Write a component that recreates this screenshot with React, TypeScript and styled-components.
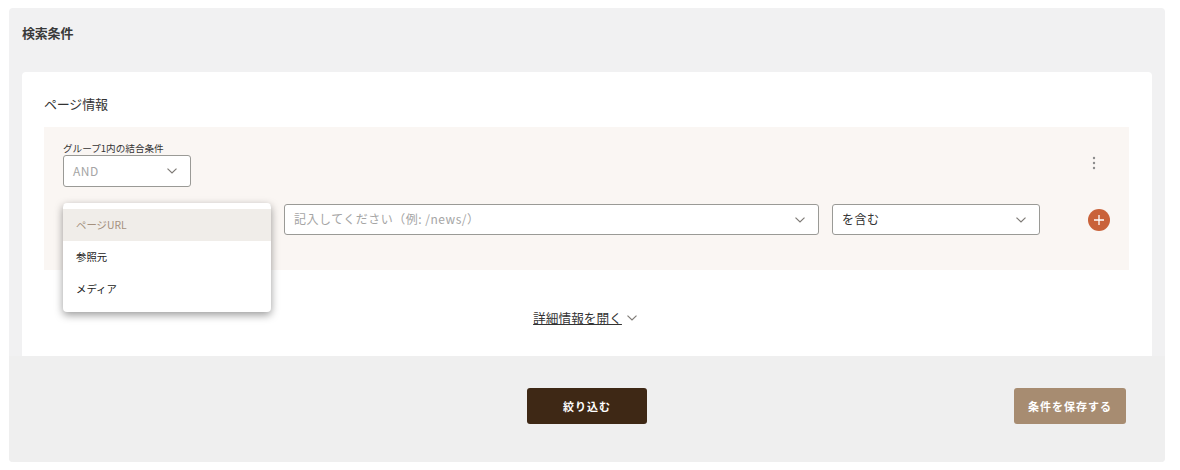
import React from "react";
import styled, { createGlobalStyle } from "styled-components";

const Global = createGlobalStyle`
  html, body {
    margin: 0;
    background: #fff;
    font-family: "Noto Sans CJK JP", "Noto Sans", sans-serif;
    color: #333;
  }
`;

const Panel = styled.div`
  margin: 8px 15px 0 9px;
  width: 1156px;
  height: 454px;
  border-radius: 4px;
  overflow: hidden;
  background: #f1f1f2;
  display: flex;
  flex-direction: column;
`;

const PanelTitle = styled.div`
  font-size: 13px;
  letter-spacing: -0.2px;
  line-height: 18px;
  font-weight: 700;
  color: #3a3a3a;
  padding: 16px 13px 0;
  height: 48px;
`;

const Card = styled.div`
  margin: 0 13px;
  height: 284px;
  background: #fff;
  border-radius: 4px 4px 0 0;
  padding: 22px 23px 0 22px;
  box-sizing: border-box;
  display: flex;
  flex-direction: column;
`;

const CardTitle = styled.div`
  font-size: 13px;
  letter-spacing: -0.2px;
  line-height: 20px;
  color: #333;
  margin-bottom: 13px;
`;

const Group = styled.div`
  height: 143px;
  background: #faf6f3;
  padding: 14px 19px 0;
  box-sizing: border-box;
  display: flex;
  flex-direction: column;
  gap: 17px;
`;

const GroupHead = styled.div`
  display: flex;
  justify-content: space-between;
  align-items: flex-end;
`;

const FieldLabel = styled.div`
  font-size: 9.6px;
  line-height: 14px;
  color: #333;
`;

const Select = styled.div<{ $width: number; $height?: number }>`
  position: relative;
  width: ${(p) => p.$width}px;
  height: ${(p) => p.$height ?? 31}px;
  flex: none;
  box-sizing: border-box;
  background: #fff;
  border: 1px solid #9a9a96;
  border-radius: 3px;
  padding: 0 12px 0 9px;
  display: flex;
  align-items: center;
  justify-content: space-between;
`;

const SelectText = styled.span<{ $muted?: boolean }>`
  font-size: 12px;
  letter-spacing: 0.5px;
  padding-bottom: 2px;
  color: ${(p) => (p.$muted ? "#a5a5a5" : "#333")};
`;

const Chevron = styled.svg`
  width: 12px;
  height: 12px;
  flex: none;
  fill: none;
  stroke: #7f7b77;
  stroke-width: 1.2;
`;

const Dots = styled.svg`
  width: 4px;
  height: 14px;
  margin: 0 14px 17px 0;
  fill: #8c8c8c;
`;

const Row = styled.div`
  display: flex;
  align-items: center;
  height: 31px;
  gap: 13px;
`;

const Menu = styled.ul`
  position: absolute;
  left: -1px;
  top: -2px;
  z-index: 2;
  width: 208px;
  margin: 0;
  padding: 6px 0 8px;
  box-sizing: border-box;
  height: 109px;
  list-style: none;
  background: #fff;
  border-radius: 4px;
  box-shadow: 0 3px 8px rgba(0, 0, 0, 0.4);
`;

const MenuItem = styled.li<{ $active?: boolean }>`
  height: 32px;
  padding: 0 0 2px 13px;
  box-sizing: border-box;
  display: flex;
  align-items: center;
  font-size: 10.4px;
  color: ${(p) => (p.$active ? "#a5917e" : "#222")};
  background: ${(p) => (p.$active ? "#f0ede9" : "#fff")};
`;

const AddButton = styled.div`
  width: 22px;
  height: 22px;
  margin-left: 35px;
  border-radius: 50%;
  background: #c9623a;
  display: flex;
  align-items: center;
  justify-content: center;
`;

const Plus = styled.svg`
  width: 12px;
  height: 12px;
  stroke: #fff;
  stroke-width: 1.3;
`;

const DetailRow = styled.div`
  display: flex;
  justify-content: center;
  align-items: center;
  gap: 4px;
  margin-top: 39px;
  margin-right: 2px;
`;

const DetailLink = styled.span`
  font-size: 12.7px;
  line-height: 18px;
  color: #333;
  text-decoration: underline;
`;

const Footer = styled.div`
  flex: 1;
  background: #efefef;
  padding: 32px 39px 0 518px;
  display: flex;
  justify-content: space-between;
  align-items: flex-start;
`;

const ActionButton = styled.div<{ $primary?: boolean }>`
  width: ${(p) => (p.$primary ? 120 : 112)}px;
  height: 36px;
  border-radius: 3px;
  background: ${(p) => (p.$primary ? "#3e2815" : "#a78c71")};
  color: #fff;
  font-size: 11px;
  font-weight: 700;
  letter-spacing: 1px;
  display: flex;
  align-items: center;
  justify-content: center;
`;

const ChevronIcon: React.FC = () => (
  <Chevron viewBox="0 0 12 12">
    <path d="M1.5 3.6 6 8l4.5-4.4" />
  </Chevron>
);

export default function App() {
  return (
    <>
      <Global />
      <Panel>
        <PanelTitle>検索条件</PanelTitle>
        <Card>
          <CardTitle>ページ情報</CardTitle>
          <Group>
            <GroupHead>
              <div>
                <FieldLabel>グループ1内の結合条件</FieldLabel>
                <Select $width={128} $height={32}>
                  <SelectText $muted>AND</SelectText>
                  <ChevronIcon />
                </Select>
              </div>
              <Dots viewBox="0 0 4 14">
                <circle cx="2" cy="2" r="1.2" />
                <circle cx="2" cy="7" r="1.2" />
                <circle cx="2" cy="12" r="1.2" />
              </Dots>
            </GroupHead>
            <Row>
              <Select $width={208}>
                <Menu>
                  <MenuItem $active>ページURL</MenuItem>
                  <MenuItem>参照元</MenuItem>
                  <MenuItem>メディア</MenuItem>
                </Menu>
              </Select>
              <Select $width={535}>
                <SelectText $muted>記入してください（例: /news/）</SelectText>
                <ChevronIcon />
              </Select>
              <Select $width={208}>
                <SelectText>を含む</SelectText>
                <ChevronIcon />
              </Select>
              <AddButton>
                <Plus viewBox="0 0 12 12">
                  <path d="M6 1v10M1 6h10" />
                </Plus>
              </AddButton>
            </Row>
          </Group>
          <DetailRow>
            <DetailLink>詳細情報を開く</DetailLink>
            <ChevronIcon />
          </DetailRow>
        </Card>
        <Footer>
          <ActionButton $primary>絞り込む</ActionButton>
          <ActionButton>条件を保存する</ActionButton>
        </Footer>
      </Panel>
    </>
  );
}
